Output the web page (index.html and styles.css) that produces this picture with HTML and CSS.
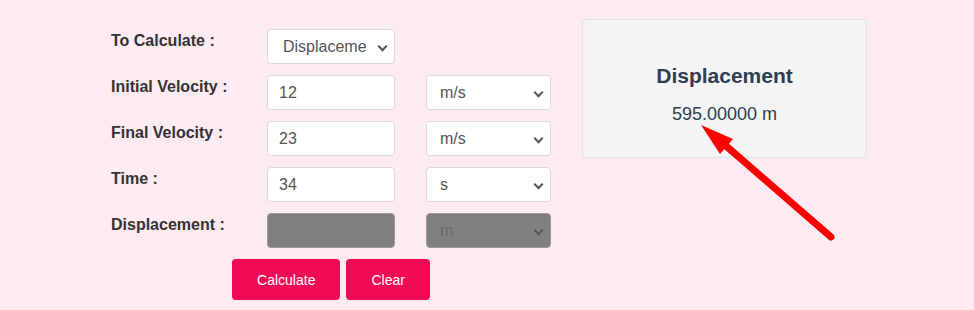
FILE: index.html
```html
<!DOCTYPE html>
<html lang="en">
<head>
    <meta charset="UTF-8">
    <meta name="viewport" content="width=device-width, initial-scale=1.0">
    <title>Displacement Calculator</title>
    <link rel="stylesheet" href="styles.css">
</head>
<body>
    <div class="page">
        <form class="calc-form">
            <div class="row">
                <label class="field-label">To Calculate :</label>
                <span class="select-wrap">
                    <select class="field wide">
                        <option>Displacement</option>
                        <option>Initial Velocity</option>
                        <option>Final Velocity</option>
                        <option>Time</option>
                    </select>
                </span>
            </div>
            <div class="row">
                <label class="field-label">Initial Velocity :</label>
                <input class="field" type="text" value="12">
                <span class="select-wrap">
                    <select class="field"><option>m/s</option><option>km/h</option></select>
                </span>
            </div>
            <div class="row">
                <label class="field-label">Final Velocity :</label>
                <input class="field" type="text" value="23">
                <span class="select-wrap">
                    <select class="field"><option>m/s</option><option>km/h</option></select>
                </span>
            </div>
            <div class="row">
                <label class="field-label">Time :</label>
                <input class="field" type="text" value="34">
                <span class="select-wrap">
                    <select class="field"><option>s</option><option>min</option><option>h</option></select>
                </span>
            </div>
            <div class="row">
                <label class="field-label">Displacement :</label>
                <input class="field" type="text" disabled>
                <span class="select-wrap">
                    <select class="field" disabled><option>m</option></select>
                </span>
            </div>
            <div class="actions">
                <button type="button" class="btn">Calculate</button>
                <button type="button" class="btn">Clear</button>
            </div>
        </form>

        <div class="result-box">
            <h2>Displacement</h2>
            <div class="result-value">595.00000 m</div>
        </div>

        <!-- annotation arrow pointing at the result -->
        <svg class="pointer" width="150" height="130" viewBox="0 0 150 130">
            <line x1="35" y1="30" x2="141" y2="122" stroke="#ff0000" stroke-width="7" stroke-linecap="round"/>
            <polygon points="11,10 43,24 30,39" fill="#ff0000"/>
        </svg>
    </div>
</body>
</html>
```

FILE: styles.css
```css
body {
    margin: 0;
    background: #fdebf1;
    font-family: "Liberation Sans", Arial, sans-serif;
}
.page {
    position: relative;
    display: flex;
    align-items: flex-start;
    padding: 19px 0 0 111px;
    height: 291px;
}
.calc-form {
    width: 440px;
    margin: 10px 0 0 0;
}
.row {
    display: grid;
    grid-template-columns: 125px 128px 125px;
    column-gap: 31px;
    margin-bottom: 11px;
}
.field-label {
    font-size: 16px;
    font-weight: bold;
    line-height: 18px;
    padding-top: 3px;
    color: #333;
    white-space: nowrap;
}
.field {
    box-sizing: border-box;
    width: 100%;
    height: 35px;
    margin: 0;
    padding: 0 11px;
    border: 1px solid #dadada;
    border-radius: 4px;
    background: #fff;
    color: #555;
    font-family: inherit;
    font-size: 16px;
    outline: none;
}
.select-wrap {
    position: relative;
    display: block;
}
.select-wrap select {
    -webkit-appearance: none;
    appearance: none;
    padding: 0 24px 0 13px;
}
.select-wrap select.wide {
    padding: 0 28px 0 15px;
}
.select-wrap::after {
    content: "";
    position: absolute;
    right: 9px;
    top: 50%;
    width: 5px;
    height: 5px;
    margin-top: -4px;
    border-right: 2px solid #555;
    border-bottom: 2px solid #555;
    transform: rotate(45deg);
    pointer-events: none;
}
.field:disabled {
    opacity: 1;
    background: #808080;
    border-color: #9a9a9a;
    color: #6a6a6a;
}
.actions {
    display: flex;
    justify-content: center;
    gap: 6px;
}
.btn {
    height: 41px;
    padding: 0 25px;
    border: none;
    border-radius: 4px;
    background: #f30a54;
    color: #fff;
    font-family: inherit;
    font-size: 14px;
}
.result-box {
    box-sizing: border-box;
    width: 285px;
    height: 139px;
    margin-left: 31px;
    padding-top: 44px;
    background: #f4f4f4;
    border: 1px solid #e2e2e2;
    border-radius: 4px;
    text-align: center;
    color: #2c3e50;
}
.result-box h2 {
    margin: 0 0 16px 0;
    font-size: 21px;
    line-height: 24px;
}
.result-value {
    font-size: 18px;
    line-height: 21px;
}
.pointer {
    position: absolute;
    left: 690px;
    top: 115px;
}
```
